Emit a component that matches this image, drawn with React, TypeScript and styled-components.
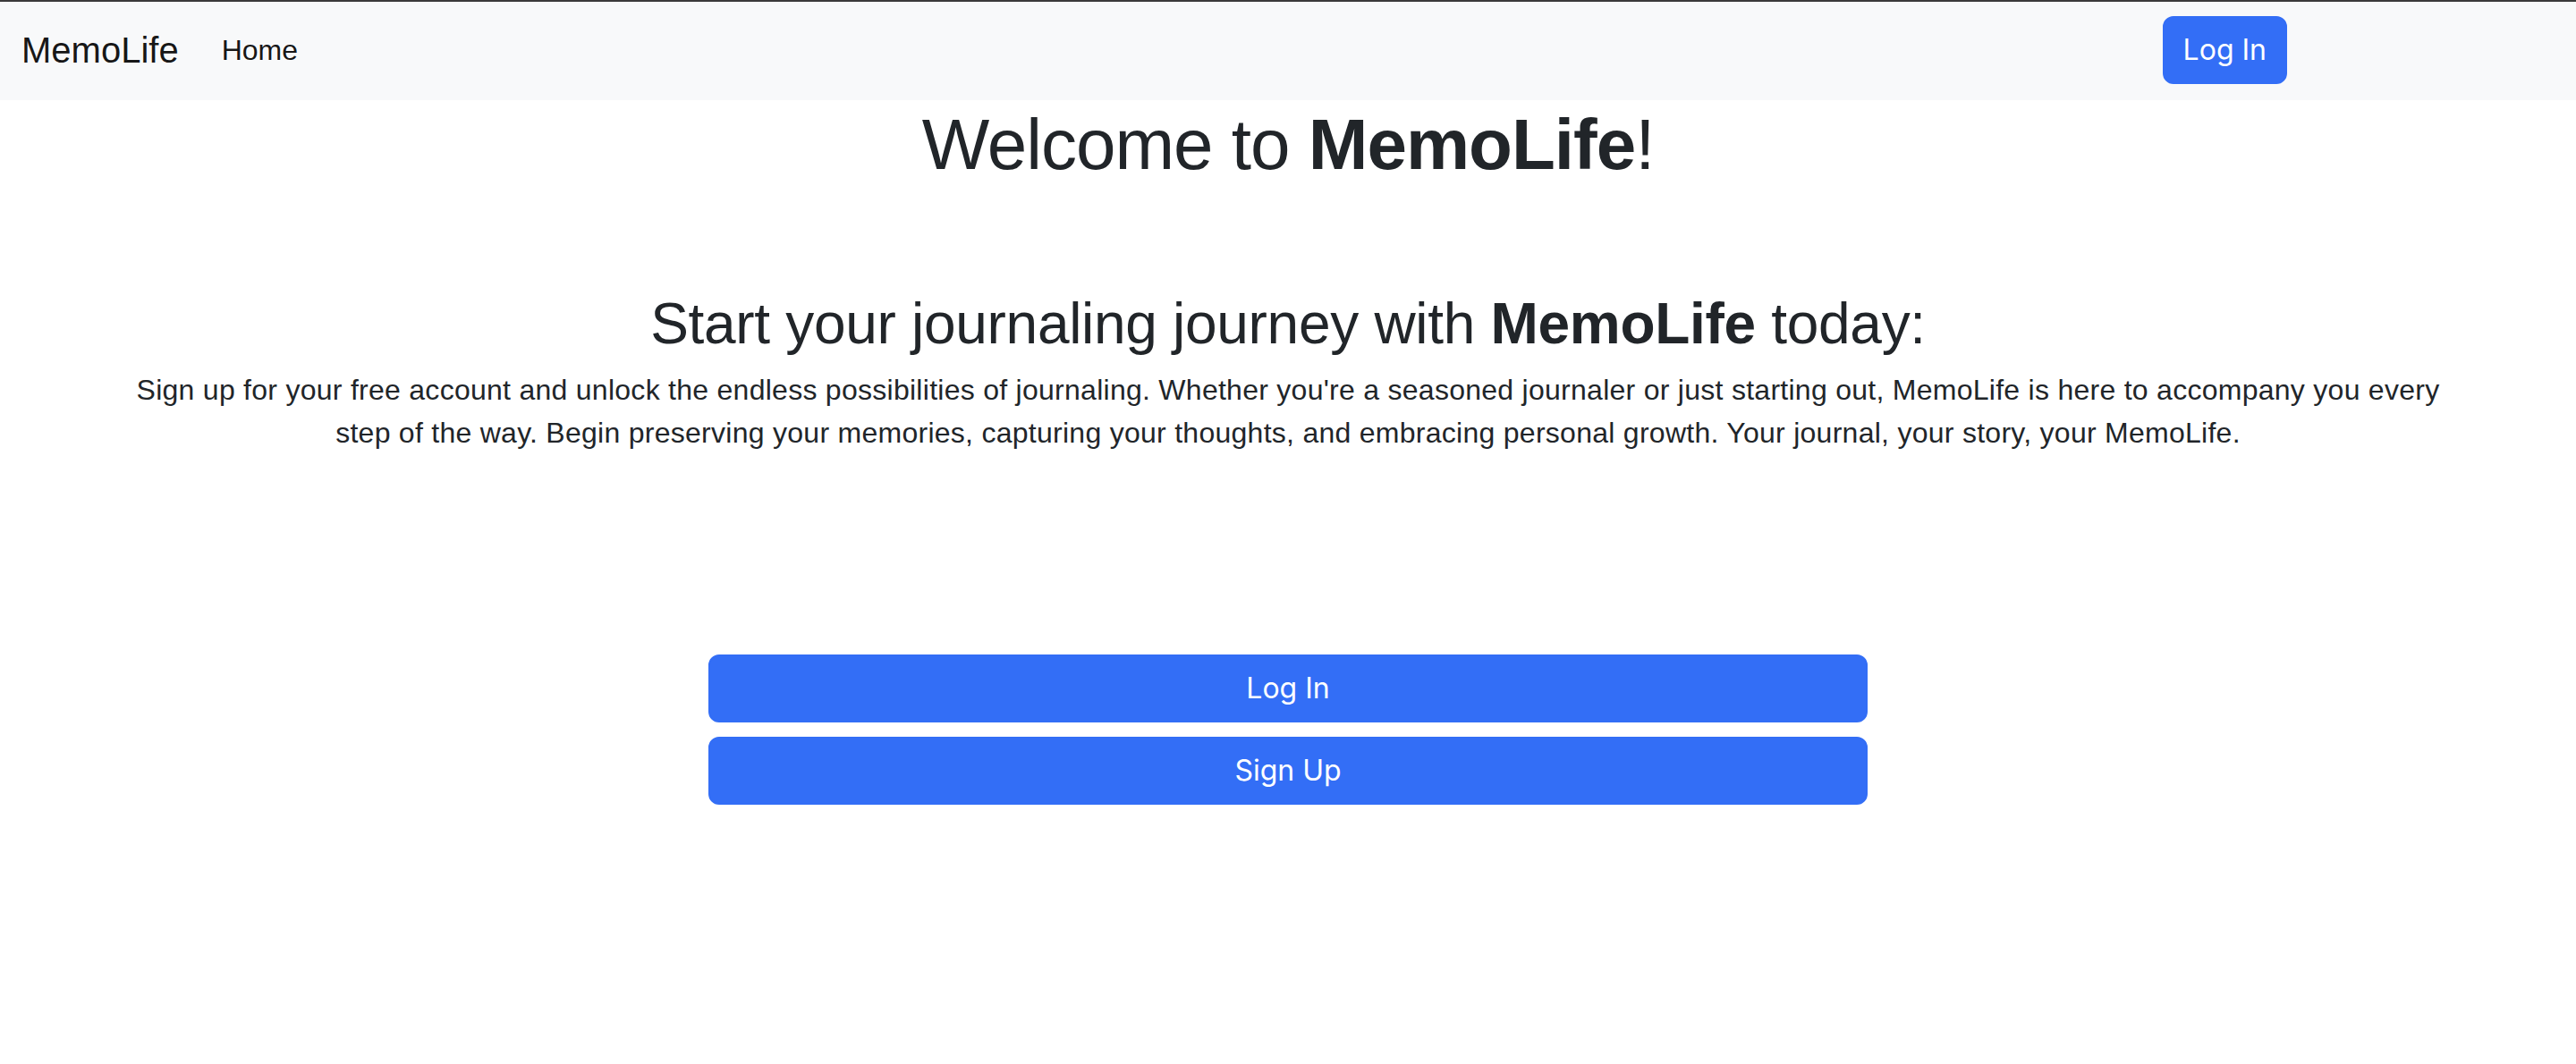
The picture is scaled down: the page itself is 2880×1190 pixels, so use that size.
import React from "react";
import styled, { createGlobalStyle } from "styled-components";

const GlobalStyle = createGlobalStyle`
  html, body {
    margin: 0;
    padding: 0;
    background: #ffffff;
    font-family: "Liberation Sans", Arial, Helvetica, sans-serif;
    color: #212529;
  }
  * { box-sizing: border-box; }
`;

const Navbar = styled.nav`
  display: flex;
  align-items: center;
  height: 112px;
  padding: 16px 24px;
  background: #f8f9fa;
  box-shadow: inset 0 2px 0 #3a3a3a;
`;

const Brand = styled.a`
  font-size: 40px;
  line-height: 60px;
  padding: 10px 0;
  margin-right: 32px;
  color: rgba(0, 0, 0, 0.92);
  text-decoration: none;
`;

const NavList = styled.ul`
  display: flex;
  flex: 1;
  margin: 0;
  padding: 0;
  list-style: none;
`;

const NavLink = styled.a`
  display: block;
  padding: 16px;
  font-size: 32px;
  line-height: 48px;
  color: rgba(0, 0, 0, 0.92);
  text-decoration: none;
`;

const NavActions = styled.div`
  display: flex;
  align-items: center;
  padding-right: 299px;
`;

const Button = styled.button<{ $block?: boolean }>`
  display: block;
  width: ${(p) => (p.$block ? "100%" : "auto")};
  height: 76px;
  padding: 0 ${(p) => (p.$block ? "24px" : "21px")};
  border: 2px solid #336ef6;
  border-radius: 12px;
  background: #336ef6;
  color: #ffffff;
  font-family: Inter, "Noto Sans", sans-serif;
  font-size: 32px;
  line-height: 48px;
  cursor: pointer;
`;

const Main = styled.main`
  width: 2640px;
  margin: 0 auto;
  padding: 0 12px;
  text-align: center;
`;

const Title = styled.h1`
  margin: 2px 0 0;
  font-size: 80px;
  line-height: 96px;
  font-weight: 500;
  letter-spacing: -1px;
`;

const Subtitle = styled.h2`
  margin: 114px 0 0;
  font-size: 64px;
  line-height: 77px;
  font-weight: 500;
  letter-spacing: -0.3px;
`;

const Lead = styled.p`
  margin: 11px 0 0;
  font-size: 32px;
  line-height: 48px;
  letter-spacing: 0.27px;
`;

const ButtonStack = styled.div`
  display: flex;
  flex-direction: column;
  gap: 16px;
  width: 1296px;
  margin: 224px auto 0;
`;

export default function App() {
  return (
    <>
      <GlobalStyle />
      <Navbar>
        <Brand href="#">MemoLife</Brand>
        <NavList>
          <li>
            <NavLink href="#">Home</NavLink>
          </li>
        </NavList>
        <NavActions>
          <Button>Log In</Button>
        </NavActions>
      </Navbar>
      <Main>
        <Title>
          Welcome to <strong>MemoLife</strong>!
        </Title>
        <Subtitle>
          Start your journaling journey with <strong>MemoLife</strong> today:
        </Subtitle>
        <Lead>
          Sign up for your free account and unlock the endless possibilities of
          journaling. Whether you're a seasoned journaler or just starting out,
          MemoLife is here to accompany you every step of the way. Begin
          preserving your memories, capturing your thoughts, and embracing
          personal growth. Your journal, your story, your MemoLife.
        </Lead>
        <ButtonStack>
          <Button $block>Log In</Button>
          <Button $block>Sign Up</Button>
        </ButtonStack>
      </Main>
    </>
  );
}
